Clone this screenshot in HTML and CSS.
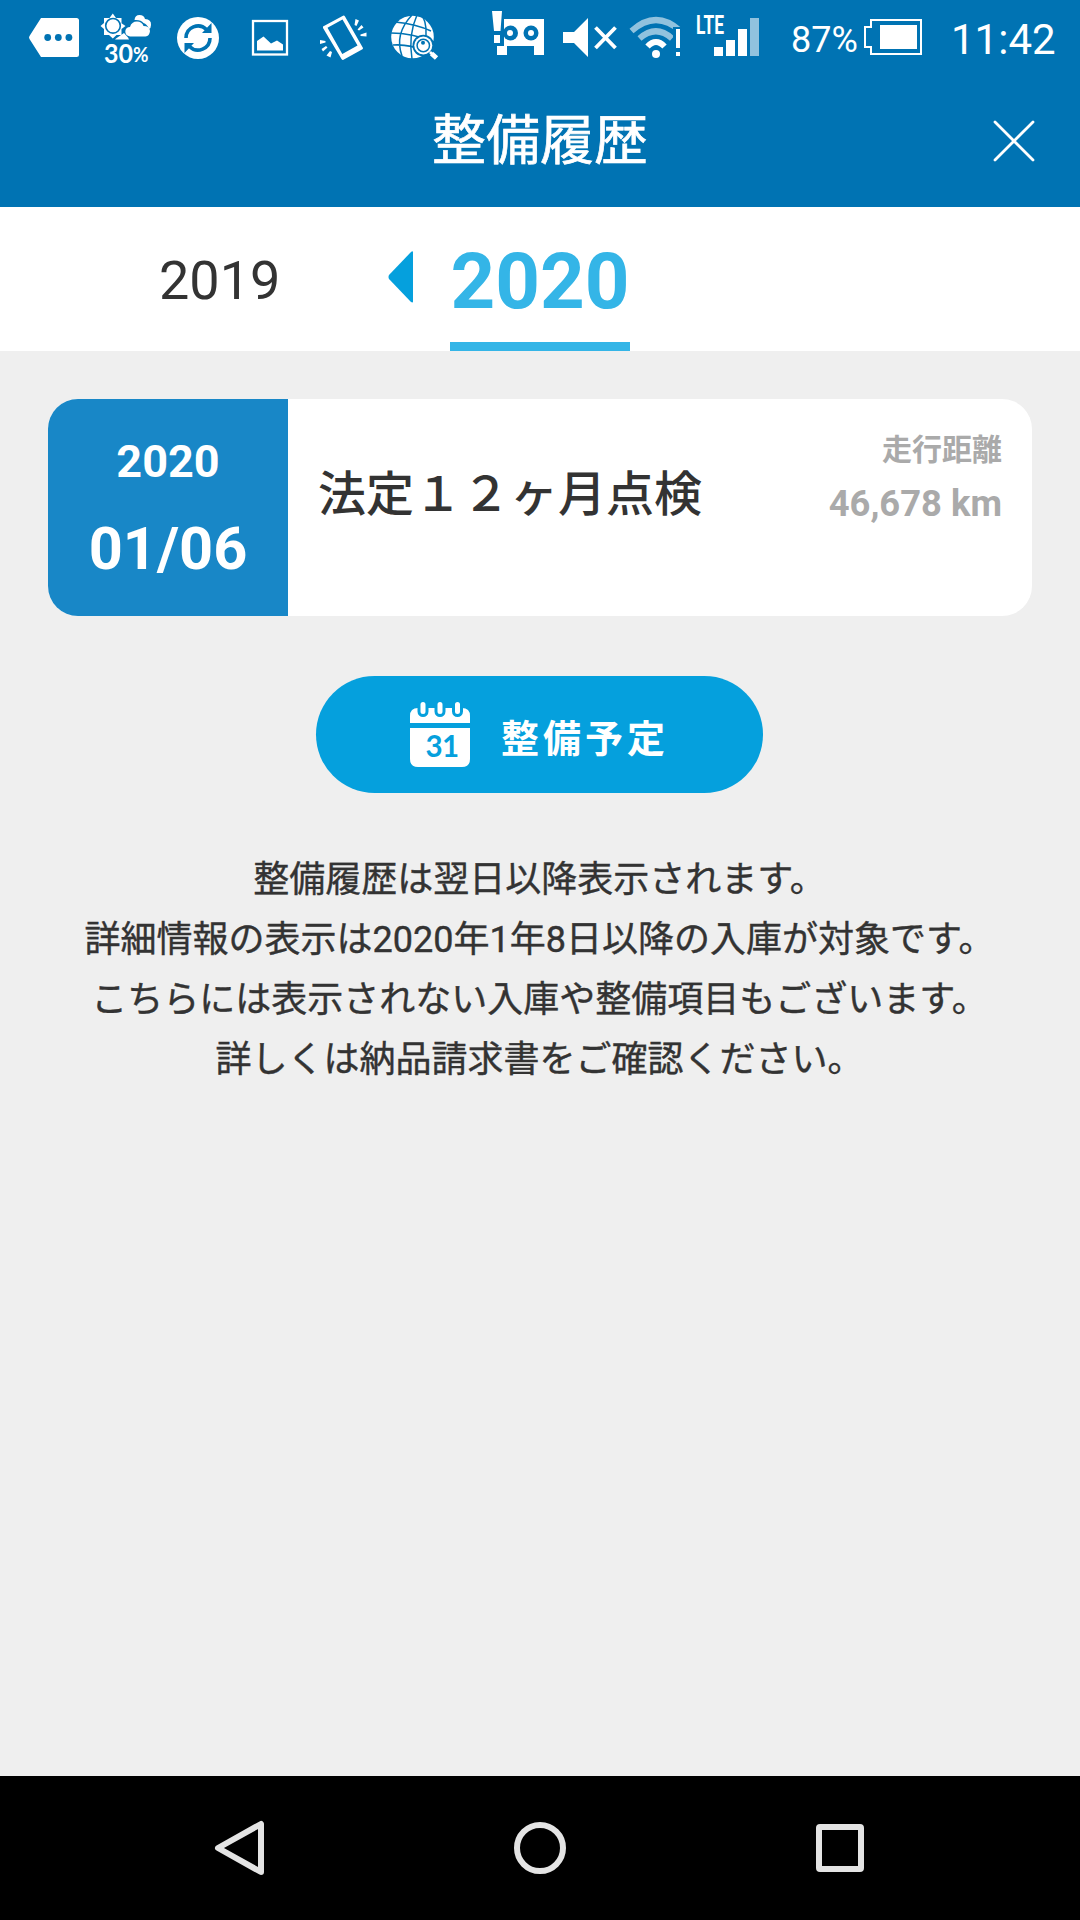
FILE: index.html
```html
<!DOCTYPE html>
<html lang="ja">
<head>
<meta charset="utf-8">
<title>整備履歴</title>
<link rel="stylesheet" href="styles.css">
</head>
<body>
<div class="status">
  <svg width="90" height="72" viewBox="0 0 90 72"><path class="w" d="M41 18H76.500Q79 18 79 20.500V54.500Q79 57 76.500 57H41L29.500 39Q28.500 37.500 29.500 36Z"/><g class="b"><circle cx="47.700" cy="37.500" r="3.400"/><circle cx="58.300" cy="37.500" r="3.400"/><circle cx="68.900" cy="37.500" r="3.400"/></g></svg>
  <svg width="75" height="72" viewBox="90 0 75 72"><path class="w" d="M112.800 13.500L116 18H121.500V23.300L125.500 26L121.500 29V35H116.500L112.800 38.500L109 35H104V29L100.500 26L104 23V18H109.500Z"/><circle class="lb" cx="113" cy="25.800" r="7.300" stroke-width="1.600"/><path class="w" d="M116 38.500L124 33L128 37.500L129 39.500H115Z"/><path class="w" d="M134.500 20Q135 15 139.500 15Q144 15 145 19Q151.500 19.500 151 25Q151 28 149 29Q147 24 143.500 23Q141 19.500 134.500 20Z"/><path class="w" d="M130 36.500Q125 35.500 125.300 31Q126 27 130 27Q131.500 21.500 137 21.500Q142 21.500 143.500 26Q149.500 26 150 31Q149.500 36 145.500 36.500Z"/><text class="pop" x="104" y="62.500" font-size="27" textLength="29" lengthAdjust="spacingAndGlyphs">30</text><text class="pop" x="133" y="62" font-size="20" textLength="15.500" lengthAdjust="spacingAndGlyphs">%</text></svg>
  <svg width="65" height="72" viewBox="165 0 65 72"><circle class="w" cx="198" cy="38" r="21"/><g class="lb" stroke-width="3.600"><path d="M186 38A12 12 0 0 1 206.500 29.500"/><path d="M210 38A12 12 0 0 1 189.500 46.500"/></g><path class="b" d="M211.500 23V33H202ZM184.500 53V43H194Z"/></svg>
  <svg width="75" height="72" viewBox="230 0 75 72"><rect class="lw" x="253" y="21" width="34" height="33.500" stroke-width="2.300"/><path class="w" d="M257 50.500V41L263.500 36.500L271 43.500L277 40.500L283 44.500V50.500Z"/></svg>
  <svg width="75" height="72" viewBox="305 0 75 72"><path class="w" fill-rule="evenodd" d="M323 26.500L343.500 15.500Q344.500 15.500 345 16.500L363 48Q363 49 362 49.500L343 60Q342 60 341.500 59L323 28ZM327.500 27.800L342.500 19.500L357.500 45.500L342.300 54Z"/><path class="w" d="M355.500 19L359 20.500L356.500 26L354.500 25ZM361.500 25L363.500 27.500L359 30.500L357.500 29.500ZM366.500 32.500V36.500L360.500 36V34.500ZM320 40L325.500 41V42.500L320 44ZM326 46L327.500 47.500L323 51.500L321.500 49ZM330 51L332 52L330.500 57.500L326.500 55.500Z"/></svg>
  <svg width="70" height="72" viewBox="380 0 70 72"><circle class="w" cx="412.500" cy="37" r="21.300"/><g class="lb" stroke-width="1.500"><path d="M395 22Q416 24 431 31M391 33Q412 33 434 42M393 45Q410 44 424 51M412 15Q394 34 402 56M417 15Q408 35 412 59M423 17Q428 27 425 42"/></g><circle class="b" cx="423.300" cy="45.500" r="10.800"/><circle cx="423.300" cy="45.500" r="9" class="w"/><circle class="lb" cx="423.300" cy="45.500" r="6.200" stroke-width="1.500"/><circle class="b" cx="423" cy="42.700" r="2"/><path class="lb" d="M430 52L438 60" stroke-width="7"/><path class="lw" d="M430 52L436 58" stroke-width="2.600"/><path class="lw" d="M431.500 53.500L436.500 58" stroke-width="4.800"/></svg>
  <svg width="105" height="72" viewBox="450 0 105 72"><path class="w" d="M504 19H544V55H534V46H507V55H497V46H504Z"/><circle class="b" cx="510.500" cy="33" r="7.500"/><circle class="b" cx="531" cy="33" r="7.500"/><circle class="w" cx="510" cy="33" r="3"/><circle class="w" cx="531" cy="33" r="3"/><path class="w" d="M492 11H502L500.500 31H494ZM494 35H500V43H494Z"/></svg>
  <svg width="65" height="72" viewBox="555 0 65 72"><path class="w" d="M563 32H574L588 18V57L574 43H563Z"/><path class="lw" d="M595.500 27.500L615.500 48M615.500 27.500L595.500 48" stroke-width="3.800"/></svg>
  <svg width="70" height="72" viewBox="620 0 70 72"><g class="lw" stroke-width="6"><g opacity=".57"><path d="M631.500 31Q656 9 680.500 31"/><path d="M639.500 38.500Q656 24 672 38.500"/></g><path d="M647.500 46.500Q656 37.500 664.500 46.500"/></g><circle class="w" cx="656" cy="54" r="4"/><path class="b" d="M673 27H685V60H673Z"/><path class="w" d="M676 29H680V48H676ZM676 52H680V56H676Z"/></svg>
  <svg width="100" height="72" viewBox="690 0 100 72"><text class="lte" x="696" y="34" font-size="26" textLength="28" lengthAdjust="spacingAndGlyphs">LTE</text><path class="w" d="M714 47H723V56H714ZM726 40H735V56H726ZM738 29H747V56H738Z"/><path class="w" opacity=".57" d="M750 18H759V56H750Z"/></svg>
  <span class="percent">87%</span>
  <svg width="70" height="72" viewBox="860 0 70 72"><path class="lw" d="M871 20H921V54H871V47H865V27H871Z" stroke-width="2"/><path class="w" d="M880 25H917V49H880Z"/></svg>
  <span class="clock">11:42</span>
</div>
<header class="header">
  <h1>整備履歴</h1>
  <svg class="close" width="42" height="42" viewBox="0 0 42 42"><path class="lw" d="M2 2L40 40M40 2L2 40" stroke-width="2.800" stroke-linecap="round"/></svg>
</header>
<nav class="years">
  <span class="year">2019</span>
  <svg class="arrow" width="26" height="52" viewBox="0 0 26 52"><path d="M23 1Q25 -0.500 25 1.500V50.500Q25 52 23 51L1 28Q0 26 1 24Z"/></svg>
  <span class="current">2020</span>
</nav>
<main class="content">
  <article class="card">
    <div class="date"><span class="date-year">2020</span><span class="date-day">01/06</span></div>
    <h2>法定１２ヶ月点検</h2>
    <div class="distance"><span class="label">走行距離</span><span class="km">46,678 km</span></div>
  </article>
  <div class="plan">
    <svg width="60" height="66" viewBox="0 0 60 66"><path class="w" d="M0 21V14Q0 6 8 6H52Q60 6 60 14V21ZM0 26H60V57Q60 65 52 65H8Q0 65 0 57Z"/><g class="lp" stroke-width="11" stroke-linecap="round"><path d="M13 1V9.500M30 1V9.500M47.500 1V9.500"/></g><g class="lw" stroke-width="5" stroke-linecap="round"><path d="M13 2.500V9.500M30 2.500V9.500M47.500 2.500V9.500"/></g><text class="day" x="15.500 32" y="54.500" font-size="29.500">31</text></svg>
    <span>整備予定</span>
  </div>
  <p class="note">整備履歴は翌日以降表示されます。<br>詳細情報の表示は2020年1年8日以降の入庫が対象です。<br>こちらには表示されない入庫や整備項目もございます。<br>詳しくは納品請求書をご確認ください。</p>
</main>
<footer class="keys">
  <svg width="60" height="60" viewBox="0 0 60 60"><path d="M51 6V54L8 30Z"/></svg>
  <svg width="60" height="60" viewBox="0 0 60 60"><circle cx="30" cy="30" r="23"/></svg>
  <svg width="60" height="60" viewBox="0 0 60 60"><rect x="9" y="9" width="42" height="42" rx="1"/></svg>
</footer>
</body>
</html>
```

FILE: styles.css
```css
* { box-sizing: border-box; }
body {
  margin: 0;
  width: 1080px;
  height: 1920px;
  display: flex;
  flex-direction: column;
  background: #efefef;
  color: #333;
  font-family: Roboto, "Noto Sans CJK JP", sans-serif;
  overflow: hidden;
}
svg { display: block; flex: none; }
h1, h2, p { margin: 0; font-weight: 400; }
.w { fill: #fff; }
.b { fill: #0073b3; }
.lw { fill: none; stroke: #fff; }
.lb { fill: none; stroke: #0073b3; }
.lp { fill: none; stroke: #05a0dd; }

.status {
  height: 72px;
  flex: none;
  display: flex;
  background: #0073b3;
  color: #fff;
  white-space: nowrap;
}
.pop { fill: #fff; font-family: Lato, sans-serif; font-weight: 700; }
.lte { fill: #fff; font-family: Roboto, sans-serif; font-weight: 700; }
.percent { width: 70px; padding-left: 1px; font-size: 36px; line-height: 81px; }
.clock { padding-left: 21px; font-size: 42px; line-height: 79px; }

.header {
  height: 135px;
  flex: none;
  display: grid;
  grid-template-columns: 92px 1fr 92px;
  grid-template-rows: 135px;
  background: #0073b3;
  color: #fff;
}
.header h1 {
  grid-column: 2;
  text-align: center;
  font-size: 54px;
  line-height: 140px;
  -webkit-text-stroke: 0.7px #fff;
}
.close { margin: 48px 0 0 5px; }

.years {
  height: 144px;
  flex: none;
  display: grid;
  grid-template-columns: 159px 229px 62px 180px;
  grid-template-rows: 144px;
  background: #fff;
}
.year { grid-column: 2; font-size: 54px; line-height: 147px; }
.arrow { margin-top: 44px; fill: #05a0dd; }
.current {
  grid-column: 4;
  border-bottom: 9px solid #34b5e7;
  color: #34b5e7;
  text-align: center;
  font-size: 78px;
  font-weight: 700;
  line-height: 150px;
}

.content { flex: 1; padding: 48px; }
.card {
  height: 217px;
  display: grid;
  grid-template-columns: 240px 1fr auto;
  border-radius: 30px;
  background: #fff;
  overflow: hidden;
}
.date {
  display: flex;
  flex-direction: column;
  align-items: center;
  padding-top: 28px;
  background: #1887c7;
  color: #fff;
  font-weight: 700;
}
.date-year { font-size: 45px; line-height: 70px; }
.date-day { font-size: 59.500px; line-height: 104px; }
.card h2 { padding: 56px 0 0 30px; font-size: 48px; line-height: 80px; font-weight: 500; }
.distance {
  padding: 24px 30px 0 0;
  display: flex;
  flex-direction: column;
  align-items: flex-end;
  color: #aaa;
  font-weight: 700;
}
.label { font-size: 30px; line-height: 54px; }
.km { font-size: 36.400px; line-height: 53px; }

.plan {
  width: 447px;
  height: 117px;
  margin: 60px 0 0 268px;
  padding-left: 94px;
  display: flex;
  align-items: center;
  gap: 31px;
  border-radius: 58.5px;
  background: #05a0dd;
  color: #fff;
  font-size: 38px;
  font-weight: 700;
  letter-spacing: 4px;
}
.plan span { line-height: 50px; padding-top: 8px; }
.day { fill: #05a0dd; font-family: Lato, sans-serif; font-weight: 700; letter-spacing: 0; }

.note {
  margin: 57px 0 0 -1px;
  text-align: center;
  font-size: 36px;
  line-height: 60px;
  white-space: nowrap;
  -webkit-text-stroke: 0.4px #333;
}

.keys {
  height: 144px;
  flex: none;
  display: flex;
  justify-content: center;
  align-items: center;
  gap: 240px;
  background: #000;
}
.keys svg { fill: none; stroke: #e4e4e4; stroke-width: 6; stroke-linejoin: round; }
```
